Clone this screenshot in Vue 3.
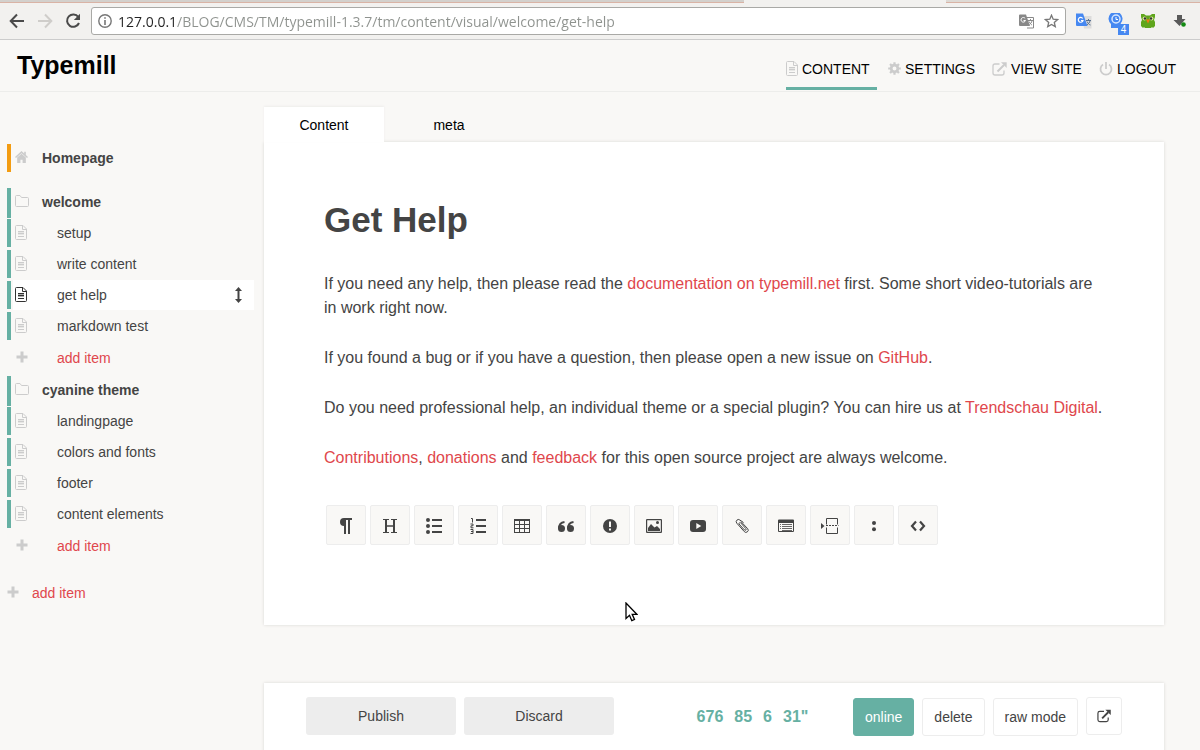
<script setup>
import { ref } from 'vue'

const url = ref('127.0.0.1/BLOG/CMS/TM/typemill-1.3.7/tm/content/visual/welcome/get-help')

const nav = [
  { label: 'CONTENT', icon: 'file', w: 12, h: 15, active: true },
  { label: 'SETTINGS', icon: 'gear', w: 13, h: 13 },
  { label: 'VIEW SITE', icon: 'external', w: 15, h: 14 },
  { label: 'LOGOUT', icon: 'power', w: 14, h: 14 }
]

const folders = [
  {
    name: 'welcome',
    items: [
      { name: 'setup' },
      { name: 'write content' },
      { name: 'get help', active: true },
      { name: 'markdown test' }
    ]
  },
  {
    name: 'cyanine theme',
    items: [
      { name: 'landingpage' },
      { name: 'colors and fonts' },
      { name: 'footer' },
      { name: 'content elements' }
    ]
  }
]

const blocks = [
  { id: 'paragraph', label: 'Paragraph' },
  { id: 'heading', label: 'Headline' },
  { id: 'bullets', label: 'Bullet list' },
  { id: 'numbers', label: 'Numbered list' },
  { id: 'table', label: 'Table' },
  { id: 'quote', label: 'Quote' },
  { id: 'notice', label: 'Notice' },
  { id: 'image', label: 'Image' },
  { id: 'video', label: 'Video' },
  { id: 'clip', label: 'File' },
  { id: 'toc', label: 'Table of contents' },
  { id: 'pagebreak', label: 'Horizontal line' },
  { id: 'definition', label: 'Definition list' },
  { id: 'code', label: 'Code' }
]
</script>

<template>
  <svg class="sprite" aria-hidden="true">
    <symbol id="file" viewBox="0 0 12 15">
      <path d="M.5 1.5a1 1 0 0 1 1-1H8L11.500 4v9.500a1 1 0 0 1-1 1h-9a1 1 0 0 1-1-1z" fill="none" stroke="currentColor" />
      <path d="M7.500.5V4.500H11.500" fill="none" stroke="currentColor" />
      <path d="M3 6.500h6M3 8.500h6M3 11.500h6" stroke="currentColor" fill="none" />
      <path d="M3 6h6v4H3z" fill="currentColor" opacity=".4" />
    </symbol>
    <symbol id="folder" viewBox="0 0 14 12">
      <path d="M.5 1.500a1 1 0 0 1 1-1H5l1.500 2H12.500a1 1 0 0 1 1 1v7a1 1 0 0 1-1 1h-11a1 1 0 0 1-1-1z" fill="none" stroke="currentColor" />
    </symbol>
    <symbol id="home" viewBox="0 0 12 11">
      <path d="M6 0 0 5.500l.9.9L6 2l5.100 4.400.9-.9-2-1.800V.7H8.500v1.600z" fill="currentColor" />
      <path d="M6 2.500 2 6v5h3V8h2v3h3V6z" fill="currentColor" />
    </symbol>
    <symbol id="plus" viewBox="0 0 12 12">
      <path d="M4.500.5h3v4h4v3h-4v4h-3v-4h-4v-3h4z" fill="currentColor" />
    </symbol>
    <symbol id="gear" viewBox="0 0 14 14">
      <circle cx="7" cy="7" r="3.600" fill="none" stroke="currentColor" stroke-width="3" />
      <path d="M7 .2v3M7 10.800v3M.2 7h3M10.800 7h3M2.200 2.200l2 2M9.800 9.800l2 2M11.800 2.200l-2 2M4.200 9.800l-2 2" stroke="currentColor" stroke-width="2.400" />
    </symbol>
    <symbol id="external" viewBox="0 0 15 14">
      <path d="M7.500 2H3a2 2 0 0 0-2 2v7a2 2 0 0 0 2 2h7a2 2 0 0 0 2-2V8.500" fill="none" stroke="currentColor" stroke-width="1.300" />
      <path d="M5.500 9.500 12 3" stroke="currentColor" stroke-width="2" />
      <path d="M9 .3h5.700V6z" fill="currentColor" />
    </symbol>
    <symbol id="power" viewBox="0 0 14 14">
      <path d="M4 2.500a5.500 5.500 0 1 0 6 0M7 0v7" fill="none" stroke="currentColor" stroke-width="1.800" />
    </symbol>
    <symbol id="move" viewBox="0 0 7 16">
      <path d="M3.500 0 7 4H4.500v8H7l-3.500 4L0 12h2.500V4H0z" fill="currentColor" />
    </symbol>
    <symbol id="paragraph" viewBox="0 0 16 16">
      <path d="M6 0h8v2h-2v14h-2V2H8v14H6V8a4 4 0 0 1 0-8z" fill="currentColor" />
    </symbol>
    <symbol id="heading" viewBox="0 0 16 16">
      <path d="M1 1.500h6M9 1.500h6M1 14.500h6M9 14.500h6" stroke="currentColor" />
      <path d="M4 1.500v13M12 1.500v13" stroke="currentColor" stroke-width="2" />
      <path d="M4 8h8" stroke="currentColor" stroke-width="1.500" />
    </symbol>
    <symbol id="bullets" viewBox="0 0 16 16">
      <g fill="currentColor"><circle cx="2" cy="2" r="2" /><circle cx="2" cy="8" r="2" /><circle cx="2" cy="14" r="2" /><path d="M6 1h10v2H6zM6 7h10v2H6zM6 13h10v2H6z" /></g>
    </symbol>
    <symbol id="numbers" viewBox="0 0 16 16">
      <path d="M6 1h10v2H6zM6 7h10v2H6zM6 13h10v2H6z" fill="currentColor" />
      <path d="M1 .5h1.500V4.500M.5 6h2.500v1.800H1v2h2.500M.5 11.500H3v4H.5M1 13.500h2" fill="none" stroke="currentColor" />
    </symbol>
    <symbol id="table" viewBox="0 0 16 16">
      <path d="M0 1h16v14H0zM1 3v3h4V3zm5 0v3h4V3zm5 0v3h4V3zM1 7v3h4V7zm5 0v3h4V7zm5 0v3h4V7zM1 11v3h4v-3zm5 0v3h4v-3zm5 0v3h4v-3z" fill="currentColor" fill-rule="evenodd" />
    </symbol>
    <symbol id="quote" viewBox="0 0 16 16">
      <g fill="currentColor"><circle cx="3.500" cy="10.500" r="3.500" /><circle cx="12.500" cy="10.500" r="3.500" /></g>
      <path d="M1 10.500C1 6.500 3 4.500 6.500 4M10 10.500C10 6.500 12 4.500 15.500 4" fill="none" stroke="currentColor" stroke-width="2" />
    </symbol>
    <symbol id="notice" viewBox="0 0 16 16">
      <circle cx="8" cy="8" r="7" fill="currentColor" />
      <path d="M7 3.500h2v5.500H7zM7 10.500h2v2H7z" fill="#f9f8f6" />
    </symbol>
    <symbol id="image" viewBox="0 0 16 16">
      <rect x=".6" y="1.600" width="14.800" height="12.800" rx=".5" fill="none" stroke="currentColor" stroke-width="1.200" />
      <path d="M2 13V10l3-4 3.500 3.500L11 8l3 3v2z" fill="currentColor" />
      <circle cx="11.500" cy="4.500" r="1.500" fill="currentColor" />
    </symbol>
    <symbol id="video" viewBox="0 0 16 16">
      <rect x="0" y="2" width="16" height="12" rx="3" fill="currentColor" />
      <path d="M6.300 5v6l5-3z" fill="#f9f8f6" />
    </symbol>
    <symbol id="clip" viewBox="0 0 16 16">
      <path d="M9.500 4.500 5.800 2a2.200 2.200 0 0 0-3 3.200l7.400 8.300a2.200 2.200 0 0 0 3.500-2.800L7.200 3.800M6.500 4 4.800 5.800l5.700 6.200c1.400 1 2-.5 1.300-1.500L6.800 5" fill="none" stroke="currentColor" />
    </symbol>
    <symbol id="toc" viewBox="0 0 16 16">
      <path d="M0 2.500a1 1 0 0 1 1-1h14a1 1 0 0 1 1 1V13a1 1 0 0 1-1 1H1a1 1 0 0 1-1-1zM1 5v8h14V5z" fill="currentColor" fill-rule="evenodd" />
      <path d="M2 6.500h1M4 6.500h10M2 8.500h1M4 8.500h10M2 10.500h1M4 10.500h10M4 12.500h10" stroke="currentColor" opacity=".8" />
    </symbol>
    <symbol id="pagebreak" viewBox="0 0 18 16">
      <path d="M0 5v6l3.500-3z" fill="currentColor" />
      <path d="M5.500 6.500V.5h11v6M5.500 9.500v6h11v-6" fill="none" stroke="currentColor" />
      <path d="M5 7.500h12.500" stroke="currentColor" stroke-dasharray="2 1" />
    </symbol>
    <symbol id="definition" viewBox="0 0 16 16">
      <circle cx="8" cy="5" r="2" fill="currentColor" /><circle cx="8" cy="11.300" r="2" fill="currentColor" />
    </symbol>
    <symbol id="code" viewBox="0 0 16 16">
      <path d="M6 3.500 2 8l4 4.500M10 3.500 14 8l-4 4.500" fill="none" stroke="currentColor" stroke-width="2.200" />
    </symbol>
  </svg>

  <div class="window">
    <div class="browser">
      <div class="strip"><span class="tabs-left"></span><span class="tab-open"></span><span class="tabs-right"></span></div>
      <div class="tools">
        <button class="tool" aria-label="Back">
          <svg width="16" height="16" viewBox="0 0 16 16"><path d="M15 8H2M8 1.500 1.700 8 8 14.500" fill="none" stroke="#4a4a4a" stroke-width="2" /></svg>
        </button>
        <button class="tool" aria-label="Forward">
          <svg width="16" height="16" viewBox="0 0 16 16"><path d="M1 8h13M8 1.500 14.300 8 8 14.500" fill="none" stroke="#cfcdca" stroke-width="2" /></svg>
        </button>
        <button class="tool" aria-label="Reload">
          <svg width="16" height="16" viewBox="0 0 16 16"><path d="M13.300 4A6.200 6.200 0 1 0 14 10" fill="none" stroke="#4a4a4a" stroke-width="2" /><path d="M15 .8V7H8.800z" fill="#4a4a4a" /></svg>
        </button>
        <div class="address">
          <svg width="14" height="14" viewBox="0 0 14 14"><circle cx="7" cy="7" r="6.200" fill="none" stroke="#777" stroke-width="1.400" /><path d="M7 3.200v1.600M7 6v5" stroke="#777" stroke-width="1.600" /></svg>
          <input v-model="url" class="url" type="text" aria-label="Address" spellcheck="false" />
          <svg width="15" height="15" viewBox="0 0 15 15"><path d="M6 3.500h8.500v10.500H8" fill="#fff" stroke="#888" /><path d="M0 1.500A1 1 0 0 1 1 .5h6L11 12H1a1 1 0 0 1-1-1z" fill="#888" /><path d="M6.200 4.500A2.300 2.300 0 1 0 6.500 6.500H4.500" fill="none" stroke="#fff" /><path d="M9 6.500h5M11.500 5v1.500M13 6.500c0 2-2 3.500-2.500 4M10 7.500c1 2 2 3 3 3.500" fill="none" stroke="#888" /></svg>
          <svg width="15" height="14" viewBox="0 0 14 14"><path d="m7 1.200 1.700 4 4.300.4-3.200 2.800 1 4.200L7 10.400l-3.800 2.200 1-4.200L1 5.600l4.300-.4z" fill="none" stroke="#777" stroke-width="1.300" /></svg>
        </div>
        <div class="extensions">
          <button class="tool" aria-label="Translate">
            <svg width="16" height="16" viewBox="0 0 16 16"><path d="M6 3h9.500v12.500H8z" fill="#dcdcdc" /><path d="M10 7.500h5M12.500 6v1.500M14 7.500c0 2-2 3.500-3 4.500M11 8.500c1 2 2 3 3.500 3.500" fill="none" stroke="#58708f" /><path d="M0 .5h7L11.500 13H1a1 1 0 0 1-1-1z" fill="#4688f1" /><path d="M6.700 5.500A2.400 2.400 0 1 0 7 7.500H5" fill="none" stroke="#fff" stroke-width="1.200" /></svg>
          </button>
          <button class="tool clock" aria-label="History">
            <svg width="16" height="16" viewBox="0 0 16 16"><path d="M3 15v-4a7 7 0 1 1 10-1l-2 5z" fill="#4688f1" /><circle cx="8" cy="6" r="4" fill="none" stroke="#d6e6ff" stroke-width="1.500" /><path d="M8 4v2.500h2" fill="none" stroke="#fff" /></svg>
            <span class="count">4</span>
          </button>
          <button class="tool" aria-label="Owl">
            <svg width="16" height="16" viewBox="0 0 16 16"><path d="M1 1h3l2 1.500h4L12 1h3v3l-1 3 1 2v4l-2 2-1-1-1 1H5l-1-1-1 1-2-2V9l1-2-1-3z" fill="#5fa51c" /><circle cx="4.500" cy="5.500" r="2" fill="#d6e79b" /><circle cx="11.500" cy="5.500" r="2" fill="#d6e79b" /><circle cx="5" cy="5.500" r="1.200" fill="#333" /><circle cx="11" cy="5.500" r="1.200" fill="#333" /><path d="M6 6.500h4L8 10.500z" fill="#f27a12" /></svg>
          </button>
          <button class="tool" aria-label="Downloads">
            <svg width="16" height="16" viewBox="0 0 16 16"><path d="M5 2h5v4h3.500L7.500 13 1.500 7H5z" fill="#5a5a5a" /><circle cx="11.500" cy="11.500" r="2.300" fill="#138a13" /></svg>
          </button>
        </div>
      </div>
    </div>

    <header class="header">
      <a class="logo" href="#">Typemill</a>
      <nav class="nav">
        <a v-for="n in nav" :key="n.label" href="#" class="nav-link" :class="{ active: n.active }">
          <svg :width="n.w" :height="n.h"><use :href="'#' + n.icon" /></svg>{{ n.label }}
        </a>
      </nav>
    </header>

    <div class="body">
      <aside class="sidebar">
        <a href="#" class="row home"><span class="mark"><svg width="13" height="12"><use href="#home" /></svg></span>Homepage</a>
        <template v-for="f in folders" :key="f.name">
          <a href="#" class="row folder"><span class="mark"><svg width="14" height="12"><use href="#folder" /></svg></span>{{ f.name }}</a>
          <a v-for="i in f.items" :key="i.name" href="#" class="row item" :class="{ active: i.active }">
            <span class="mark"><svg width="12" height="15"><use href="#file" /></svg></span>
            <span class="name">{{ i.name }}</span>
            <svg v-if="i.active" class="move" width="7" height="16"><use href="#move" /></svg>
          </a>
          <button class="add"><span class="mark"><svg width="12" height="12"><use href="#plus" /></svg></span>add item</button>
        </template>
        <button class="add root"><span class="mark"><svg width="12" height="12"><use href="#plus" /></svg></span>add item</button>
      </aside>

      <main class="main">
        <div class="tabs">
          <button class="tab active">Content</button>
          <button class="tab">meta</button>
        </div>
        <article class="card editor">
          <h1>Get Help</h1>
          <p>If you need any help, then please read the <a href="#">documentation on typemill.net</a> first. Some short video-tutorials are in work right now.</p>
          <p>If you found a bug or if you have a question, then please open a new issue on <a href="#">GitHub</a>.</p>
          <p>Do you need professional help, an individual theme or a special plugin? You can hire us at <a href="#">Trendschau Digital</a>.</p>
          <p><a href="#">Contributions</a>, <a href="#">donations</a> and <a href="#">feedback</a> for this open source project are always welcome.</p>
          <div class="blocks">
            <button v-for="b in blocks" :key="b.id" class="block" :aria-label="b.label">
              <svg :width="b.id === 'pagebreak' ? 18 : 16" height="16"><use :href="'#' + b.id" /></svg>
            </button>
          </div>
        </article>

        <div class="card publish">
          <button class="grey">Publish</button>
          <button class="grey">Discard</button>
          <div class="stats"><span>676</span><span>85</span><span>6</span><span>31"</span></div>
          <button class="small online">online</button>
          <button class="small">delete</button>
          <a class="small" href="#">raw mode</a>
          <a class="small open" href="#" aria-label="View page"><svg width="14" height="14"><use href="#external" /></svg></a>
        </div>
      </main>
    </div>

    <svg class="cursor" width="13" height="20" viewBox="0 0 13 20"><path d="M1 1v15.500l3.500-3.200 2.300 5.400 2.700-1.200-2.300-5.200h4.600z" fill="#fff" stroke="#000" stroke-width="1.300" /></svg>
  </div>
</template>

<style>
body {
  background: #f9f8f6;
}
</style>

<style scoped>
.sprite {
  position: absolute;
  width: 0;
  height: 0;
}
.window {
  position: relative;
  height: 100vh;
  overflow: hidden;
  font: 14px/20px "Liberation Sans", Arial, sans-serif;
  color: #444;
  background: #f9f8f6;
}
.window * {
  box-sizing: border-box;
}
svg {
  display: block;
  flex: none;
}
a {
  color: inherit;
  text-decoration: none;
}
button {
  font: inherit;
  color: inherit;
  border: 0;
  padding: 0;
  background: none;
}

.browser {
  background: #f2f1ef;
  border-bottom: 1px solid #ccc;
}
.strip {
  display: grid;
  grid-template-columns: 744fr 202fr 254fr;
  height: 3px;
}
.tabs-left,
.tabs-right {
  background: #d3d0cc;
  border-bottom: 1px solid #d9b3a5;
}
.tabs-right {
  background: #dedad5;
}
.tools {
  display: flex;
  align-items: center;
  padding: 4px 12px 4px 9px;
}
.tool {
  width: 16px;
  margin-right: 12px;
}
.address {
  flex: 1;
  display: flex;
  align-items: center;
  height: 28px;
  margin-left: -2px;
  padding: 0 6px;
  gap: 10px;
  border: 1px solid #a9a9a6;
  border-radius: 3px;
  background: #fff;
}
.url {
  flex: 1;
  min-width: 0;
  height: 24px;
  margin-left: -4px;
  padding: 0;
  border: 0;
  outline: 0;
  font: 14px "Open Sans", "Noto Sans", sans-serif;
  color: transparent;
  background: linear-gradient(90deg, #222 59px, #8e928e 59px);
  background-clip: text;
}
.extensions {
  display: flex;
  gap: 16px;
  padding-left: 10px;
}
.extensions .tool {
  margin: 0;
}
.clock {
  position: relative;
}
.count {
  position: absolute;
  left: 10px;
  top: 11px;
  width: 11px;
  height: 11px;
  background: #4688f1;
  color: #fff;
  font-size: 10px;
  line-height: 11px;
}

.header {
  display: flex;
  justify-content: space-between;
  height: 52px;
  padding: 0 22px 0 17px;
  border-bottom: 1px solid #ededeb;
  color: #000;
}
.logo {
  font-size: 25px;
  font-weight: bold;
  line-height: 50px;
}
.nav {
  display: grid;
  grid-template-columns: 102px 104px 107px 79px;
}
.nav-link {
  display: flex;
  align-items: center;
  gap: 4px;
  height: 50px;
  margin-right: 11px;
  padding-top: 10px;
  border-bottom: 3px solid transparent;
  white-space: nowrap;
}
.nav-link.active {
  border-color: #66b0a3;
}
.nav-link svg {
  color: #ccc;
}

.body {
  display: flex;
}
.sidebar {
  width: 264px;
  flex: none;
  padding: 52px 10px 0 7px;
}
.row,
.add {
  display: flex;
  align-items: center;
  width: 100%;
}
.row {
  height: 30px;
}
.mark {
  flex: none;
  padding-bottom: 2px;
  color: #ccc;
}
.home,
.folder {
  padding-bottom: 2px;
  font-weight: bold;
  border-left: 4px solid #66b0a3;
}
.home .mark,
.folder .mark {
  width: 31px;
  padding-left: 4px;
}
.home {
  height: 28px;
  padding-bottom: 0;
  margin-bottom: 16px;
  border-color: #f39c12;
}
.item {
  margin-bottom: 1px;
}
.item::before {
  content: "";
  align-self: stretch;
  width: 4px;
  margin: 1px 2px 1px 0;
  background: #66b0a3;
}
.item .mark {
  width: 44px;
  padding-left: 2px;
}
.item .name {
  flex: 1;
}
.item.active {
  background: linear-gradient(90deg, transparent 6px, #fff 6px);
}
.item.active .mark {
  color: #333;
}
.move {
  margin-right: 12px;
}
.add {
  height: 34px;
  padding-bottom: 2px;
  color: #e0474c;
}
.add .mark {
  width: 50px;
  padding-left: 9px;
}
.root {
  height: 32px;
  margin-top: 14px;
}
.root .mark {
  width: 25px;
  padding-left: 0;
}

.main {
  flex: 1;
  min-width: 0;
  margin-right: 36px;
  padding-top: 15px;
}
.tabs {
  display: flex;
  gap: 5px;
}
.tab {
  width: 120px;
  height: 35px;
  color: #000;
}
.tab.active {
  position: relative;
  z-index: 1;
  background: #fff;
  box-shadow: 0 -1px 2px #eeedeb;
}
.card {
  background: #fff;
  box-shadow: 0 0 3px #d8d7d4;
}
.editor {
  padding: 52px 60px 80px;
  font-size: 16px;
  line-height: 24px;
}
.editor h1 {
  margin: 0 0 27px;
  font-size: 35px;
  line-height: 51px;
}
.editor p {
  margin: 0 0 26px;
}
.editor p a {
  color: #e0474c;
}
.blocks {
  display: flex;
  flex-wrap: wrap;
  gap: 4px;
  padding: 9px 0 0 2px;
}
.block {
  display: grid;
  place-items: center;
  width: 40px;
  height: 40px;
  padding-top: 2px;
  border: 1px solid #ededed;
  border-radius: 2px;
  background: #f9f8f6;
}
.publish {
  display: flex;
  align-items: center;
  gap: 8px;
  height: 100px;
  margin-top: 58px;
  padding: 0 42px 32px;
}
.grey {
  width: 150px;
  height: 38px;
  margin-bottom: 2px;
  border-radius: 3px;
  background: #ededed;
}
.stats {
  display: flex;
  gap: 11px;
  margin: 0 auto;
  padding-left: 38px;
  font-size: 16px;
  font-weight: bold;
  color: #66b0a3;
}
.small {
  display: grid;
  place-items: center;
  height: 38px;
  padding: 0 11px;
  border: 1px solid #ededed;
  border-radius: 3px;
}
.online {
  border-color: #66b0a3;
  background: #66b0a3;
  color: #fff;
}
.open {
  margin-bottom: 2px;
  padding: 0 10px;
}

.cursor {
  position: absolute;
  left: 625px;
  top: 602px;
}
</style>
